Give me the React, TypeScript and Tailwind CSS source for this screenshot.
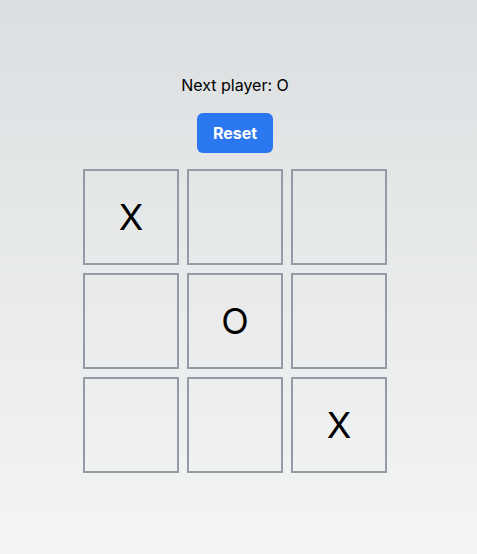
import React, { useState } from 'react';

type Cell = 'X' | 'O' | null;

const initial: Cell[] = ['X', null, null, null, 'O', null, null, null, 'X'];

export default function App() {
  const [board, setBoard] = useState<Cell[]>(initial);
  const xCount = board.filter((c) => c === 'X').length;
  const oCount = board.filter((c) => c === 'O').length;
  const next = xCount > oCount ? 'O' : 'X';

  const play = (i: number) => {
    if (board[i]) return;
    const b = board.slice();
    b[i] = next;
    setBoard(b);
  };

  return (
    <div
      className="min-h-screen w-full bg-gradient-to-b from-[#dcdfe1] to-[#f4f5f5] flex flex-col items-center pt-[73px] pr-[7px] text-black"
      style={{ fontFamily: 'Inter, "Noto Sans", sans-serif' }}
    >
      <div className="text-base leading-6 mb-4">Next player: {next}</div>
      <button
        onClick={() => setBoard(Array(9).fill(null))}
        className="bg-[#2a77ef] text-white font-bold text-base leading-6 px-4 py-2 rounded-md mb-4"
      >
        Reset
      </button>
      <div className="grid grid-cols-3 gap-2">
        {board.map((cell, i) => (
          <button
            key={i}
            onClick={() => play(i)}
            className="w-24 h-24 border-2 border-[#959ba5] flex items-center justify-center text-4xl"
          >
            {cell}
          </button>
        ))}
      </div>
    </div>
  );
}
